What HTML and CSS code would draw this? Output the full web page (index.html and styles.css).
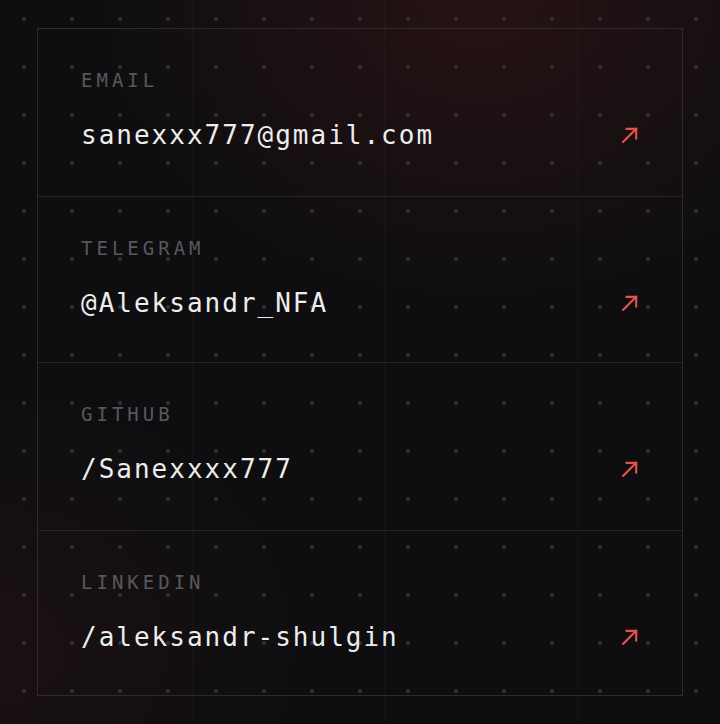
FILE: index.html
```html
<!DOCTYPE html>
<html lang="en">
<head>
<meta charset="utf-8">
<title>Contacts</title>
<link rel="stylesheet" href="styles.css">
</head>
<body>
<main class="page">
  <section class="contacts">
    <a class="contact" href="#">
      <span class="label">EMAIL</span>
      <span class="line">
        <span class="value">sanexxx777@gmail.com</span>
        <svg class="arrow" viewBox="0 0 16 16" width="16" height="16" aria-hidden="true"><path d="M2 14 L13.5 2.5 M5 2.5 H13.5 V11"/></svg>
      </span>
    </a>
    <a class="contact" href="#">
      <span class="label">TELEGRAM</span>
      <span class="line">
        <span class="value">@Aleksandr_NFA</span>
        <svg class="arrow" viewBox="0 0 16 16" width="16" height="16" aria-hidden="true"><path d="M2 14 L13.5 2.5 M5 2.5 H13.5 V11"/></svg>
      </span>
    </a>
    <a class="contact" href="#">
      <span class="label">GITHUB</span>
      <span class="line">
        <span class="value">/Sanexxxx777</span>
        <svg class="arrow" viewBox="0 0 16 16" width="16" height="16" aria-hidden="true"><path d="M2 14 L13.5 2.5 M5 2.5 H13.5 V11"/></svg>
      </span>
    </a>
    <a class="contact" href="#">
      <span class="label">LINKEDIN</span>
      <span class="line">
        <span class="value">/aleksandr-shulgin</span>
        <svg class="arrow" viewBox="0 0 16 16" width="16" height="16" aria-hidden="true"><path d="M2 14 L13.5 2.5 M5 2.5 H13.5 V11"/></svg>
      </span>
    </a>
  </section>
</main>
</body>
</html>
```
FILE: styles.css
```css
html, body {
  margin: 0;
  padding: 0;
}

body {
  width: 720px;
  height: 724px;
  overflow: hidden;
  background-color: #0e0e10;
  background-image:
    radial-gradient(circle, #303033 0, #303033 1.6px, transparent 2.4px),
    linear-gradient(90deg, transparent 192px, rgba(255,255,255,0.025) 192px, rgba(255,255,255,0.025) 193px, transparent 193px),
    linear-gradient(90deg, transparent 384px, rgba(255,255,255,0.025) 384px, rgba(255,255,255,0.025) 385px, transparent 385px),
    linear-gradient(90deg, transparent 577px, rgba(255,255,255,0.025) 577px, rgba(255,255,255,0.025) 578px, transparent 578px),
    radial-gradient(ellipse 380px 300px at 480px 0px, rgba(110, 30, 32, 0.26), transparent 100%),
    radial-gradient(ellipse 300px 260px at 0px 650px, rgba(90, 28, 30, 0.16), transparent 100%);
  background-size: 48px 48px, auto, auto, auto, auto, auto;
  background-position: 0 -5px, 0 0, 0 0, 0 0, 0 0, 0 0;
  font-family: "DejaVu Sans Mono", "Liberation Mono", monospace;
}

.page {
  padding: 28px 37px 0 37px;
}

.contacts {
  display: flex;
  flex-direction: column;
  border: 1px solid #2c2c2f;
}

.contact {
  display: flex;
  flex-direction: column;
  height: 166px;
  box-sizing: border-box;
  padding: 42px 44px 0 43px;
  text-decoration: none;
  border-top: 1px solid #262629;
}

.contact:first-child {
  border-top: none;
  height: 167px;
}

.contact:nth-child(3) {
  height: 168px;
}

.contact:last-child {
  height: 165px;
}

.label {
  font-size: 19px;
  line-height: 19px;
  letter-spacing: 4px;
  color: #58585c;
}

.line {
  display: flex;
  align-items: center;
  justify-content: space-between;
  margin-top: 32px;
}

.value {
  font-size: 26px;
  line-height: 26px;
  letter-spacing: 2px;
  color: #ededed;
}

.arrow {
  width: 18px;
  height: 18px;
  fill: none;
  stroke: #e5534b;
  stroke-width: 1.9;
  stroke-linecap: square;
  margin-top: -1px;
  margin-right: -1px;
}
```
